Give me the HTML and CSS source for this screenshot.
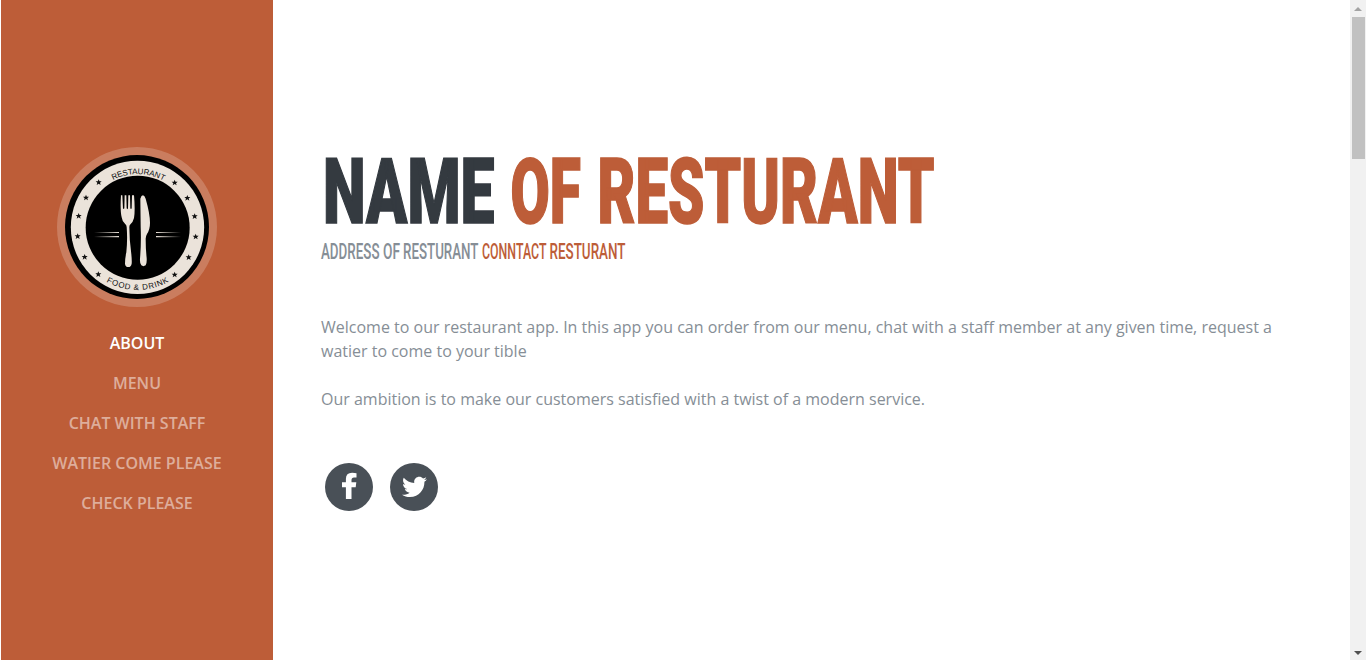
FILE: index.html
```html
<!DOCTYPE html>
<html lang="en">
<head>
<meta charset="utf-8">
<title>Restaurant</title>
<link rel="stylesheet" href="styles.css">
</head>
<body>
<div class="page">
  <nav class="sidebar">
    <svg class="logo" viewBox="21 21 480 480">
      <defs>
        <path id="arc-top" d="M102.500 262A160 160 0 0 1 422.500 262"/>
        <path id="arc-bottom" d="M74.500 262A188 188 0 0 0 450.500 262"/>
        <path id="star" d="M0-9L2.500-3 9-3 4 1.500 6 8 0 4-6 8-4 1.500-9-3-2.500-3Z"/>
        <linearGradient id="fade-left"><stop offset="0" stop-color="#ebe3da" stop-opacity="0"/><stop offset="1" stop-color="#ebe3da"/></linearGradient>
        <linearGradient id="fade-right"><stop offset="0" stop-color="#ebe3da"/><stop offset="1" stop-color="#ebe3da" stop-opacity="0"/></linearGradient>
      </defs>
      <circle cx="261" cy="261" r="240" fill="#fff" fill-opacity=".2"/>
      <circle cx="261" cy="261" r="216"/>
      <circle cx="262.500" cy="262" r="200" fill="#ebe3da"/>
      <circle cx="263" cy="263" r="156"/>
      <text class="logo-text"><textPath href="#arc-top" startOffset="50.500%" textLength="158">RESTAURANT</textPath></text>
      <text class="logo-text"><textPath href="#arc-bottom" startOffset="50%" textLength="196">FOOD &amp; DRINK</textPath></text>
      <g fill="#111">
        <use href="#star" x="146" y="127"/><use href="#star" x="108" y="173"/><use href="#star" x="86" y="228"/>
        <use href="#star" x="83" y="289"/><use href="#star" x="104" y="351"/><use href="#star" x="145" y="403"/>
        <use href="#star" x="374" y="128"/><use href="#star" x="412" y="174"/><use href="#star" x="434" y="229"/>
        <use href="#star" x="437" y="290"/><use href="#star" x="416" y="352"/><use href="#star" x="374" y="404"/>
      </g>
      <g fill="#ebe3da">
        <path d="M212 166h5l2 39q2 4 4 0l1-39h5l1 39q2 5 4 0l1-39h5l1 39q2 4 4 0l1-39h6q4 45 0 68-3 12-10 18-4 3-4 9 0 40 6 82 2 20 1 28-2 10-10 10-9 0-10-10 0-16 4-34 4-38 1-76 0-6-5-10-9-8-10-19-5-20-2-67Z"/>
        <path d="M271 176q3-10 8-10 5 1 8 10 13 46 13 72 0 20-9 34-4 7-4 14 0 30 3 58 1 17-3 22-7 5-13 0-5-5-4-20 4-48 2-96Z"/>
      </g>
      <path fill="url(#fade-left)" d="M132 276h75v3h-75ZM132 288h75v4h-75Z"/>
      <path fill="url(#fade-right)" d="M318 276h75v3h-75ZM318 288h75v4h-75Z"/>
    </svg>
    <ul class="menu">
      <li class="menu-item active">ABOUT</li>
      <li class="menu-item">MENU</li>
      <li class="menu-item">CHAT WITH STAFF</li>
      <li class="menu-item">WATIER COME PLEASE</li>
      <li class="menu-item">CHECK PLEASE</li>
    </ul>
  </nav>
  <main class="content">
    <h1 class="heading">
      <svg class="title" viewBox="0 0 640 96">
        <text x="2" y="79.300" textLength="171.500" lengthAdjust="spacingAndGlyphs">NAME</text>
        <text class="accent" x="189.500" y="79.300" textLength="70.500" lengthAdjust="spacingAndGlyphs">OF</text>
        <text class="accent" x="276.500" y="79.300" textLength="337" lengthAdjust="spacingAndGlyphs">RESTURANT</text>
      </svg>
    </h1>
    <div class="heading">
      <svg class="subtitle" viewBox="0 0 640 30">
        <text x="0" y="19" textLength="58.500" lengthAdjust="spacingAndGlyphs">ADDRESS</text>
        <text x="62" y="19" textLength="17" lengthAdjust="spacingAndGlyphs">OF</text>
        <text x="82" y="19" textLength="75.500" lengthAdjust="spacingAndGlyphs">RESTURANT</text>
        <text class="accent" x="161" y="19" textLength="64.500" lengthAdjust="spacingAndGlyphs">CONNTACT</text>
        <text class="accent" x="228.500" y="19" textLength="76" lengthAdjust="spacingAndGlyphs">RESTURANT</text>
      </svg>
    </div>
    <p class="lead">Welcome to our restaurant app. In this app you can order from our menu, chat with a staff member at any given time, request a watier to come to your tible<br><br>Our ambition is to make our customers satisfied with a twist of a modern service.</p>
    <div class="social">
      <span class="social-icon"><svg viewBox="0 0 48 48"><path d="M31.500 10.300v4.200h-2.500q-2.500 0-2.500 2.500v2.300h4.800l-.6 5h-4.200V36h-5.600V24.300H17v-5h3.900v-3.500q0-6 6.200-6 2.800 0 4.400.5Z"/></svg></span>
      <span class="social-icon"><svg viewBox="0 0 512 512"><path transform="translate(128 122) scale(.52)" d="M459.370 151.716c.325 4.548.325 9.097.325 13.645 0 138.720-105.583 298.558-298.558 298.558-59.452 0-114.680-17.219-161.137-47.106 8.447.974 16.568 1.299 25.340 1.299 49.055 0 94.213-16.568 130.274-44.832-46.132-.975-84.792-31.188-98.112-72.772 6.498.974 12.995 1.624 19.818 1.624 9.421 0 18.843-1.300 27.614-3.573-48.081-9.747-84.143-51.980-84.143-102.985v-1.299c13.969 7.797 30.214 12.670 47.431 13.319-28.264-18.843-46.781-51.005-46.781-87.391 0-19.492 5.197-37.360 14.294-52.954 51.655 63.675 129.300 105.258 216.365 109.807-1.624-7.797-2.599-15.918-2.599-24.040 0-57.828 46.782-104.934 104.934-104.934 30.213 0 57.502 12.670 76.670 33.137 23.715-4.548 46.456-13.320 66.599-25.340-7.798 24.366-24.366 44.833-46.132 57.827 21.117-2.273 41.584-8.122 60.426-16.243-14.292 20.791-32.161 39.308-52.628 54.253z"/></svg></span>
    </div>
  </main>
  <div class="scrollbar">
    <svg class="arrow up" viewBox="0 0 8 4"><path d="M0 4h8L4 0Z"/></svg>
    <div class="thumb"></div>
    <svg class="arrow down" viewBox="0 0 8 4"><path d="M0 0h8L4 4Z"/></svg>
  </div>
</div>
</body>
</html>
```

FILE: styles.css
```css
* { box-sizing: border-box; }
body { margin: 0; background: #fff; font-family: "Open Sans", sans-serif; font-size: 16px; line-height: 24px; color: #868e96; }
.page { display: flex; height: 660px; padding-left: 1px; overflow: hidden; }
.sidebar { flex: 0 0 272px; display: flex; flex-direction: column; align-items: center; padding-top: 147px; background: #bd5d38; }
.logo { display: block; width: 160px; height: 160px; flex: none; }
.logo-text { font: 24px "Liberation Sans", sans-serif; fill: #111; text-anchor: middle; }
.menu { list-style: none; margin: 16px 0 0; padding: 0; text-align: center; }
.menu-item { padding: 8px 0; font-weight: 600; color: rgba(255, 255, 255, .5); white-space: nowrap; }
.menu-item.active { color: #fff; }
.content { flex: 1; padding: 144px 48px 0; }
.heading { margin: 0; }
.heading svg { display: block; width: 640px; overflow: visible; }
.heading text { font-family: Roboto, sans-serif; }
.title { height: 96px; font-size: 91px; font-weight: 900; fill: #343a40; stroke: #343a40; stroke-width: 1.600px; }
.subtitle { height: 30px; font-size: 21.500px; font-weight: 500; fill: #868e96; }
.heading .accent { fill: #bd5d38; }
.title .accent { stroke: #bd5d38; }
.lead { margin: 45px 0 0; }
.social { display: flex; gap: 17px; margin: 52px 0 0 4px; }
.social-icon { width: 48px; height: 48px; border-radius: 50%; background: #495057; }
.social-icon svg { display: block; width: 48px; height: 48px; fill: #fff; }
.scrollbar { flex: 0 0 16px; display: flex; flex-direction: column; align-items: center; background: #f1f1f1; }
.arrow { width: 8px; height: 4px; flex: none; }
.up { margin: 7px 0 6px; fill: #a3a3a3; }
.down { margin: auto 0 5px; fill: #505050; }
.thumb { width: 13px; height: 142px; margin-left: 1px; background: #c1c1c1; }
```
